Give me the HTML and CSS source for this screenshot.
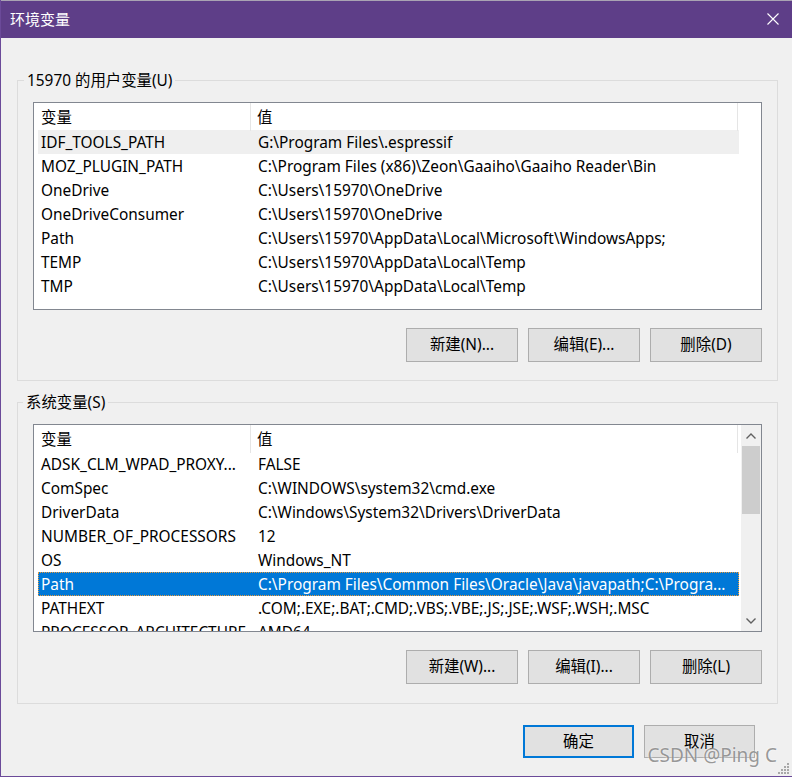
FILE: index.html
```html
<!DOCTYPE html>
<html lang="zh-CN">
<head>
    <meta charset="UTF-8">
    <title>环境变量</title>
    <link rel="stylesheet" href="styles.css">
</head>
<body>
    <div class="window">
        <header class="titlebar">
            <span class="title">环境变量</span>
            <svg class="close" width="12" height="12" viewBox="0 0 12 12">
                <path d="M0.5 0.5 L11.5 11.5 M11.5 0.5 L0.5 11.5" stroke="#fff" stroke-width="1.1" fill="none"/>
            </svg>
        </header>

        <main class="body">
            <fieldset class="group">
                <legend>15970 的用户变量(U)</legend>
                <div class="list">
                    <div class="list-content">
                        <div class="list-head">
                            <div class="head-cell first">变量</div>
                            <div class="head-cell">值</div>
                        </div>
                        <div class="row hover"><span>IDF_TOOLS_PATH</span><span>G:\Program Files\.espressif</span></div>
                        <div class="row"><span>MOZ_PLUGIN_PATH</span><span>C:\Program Files (x86)\Zeon\Gaaiho\Gaaiho Reader\Bin</span></div>
                        <div class="row"><span>OneDrive</span><span>C:\Users\15970\OneDrive</span></div>
                        <div class="row"><span>OneDriveConsumer</span><span>C:\Users\15970\OneDrive</span></div>
                        <div class="row"><span>Path</span><span>C:\Users\15970\AppData\Local\Microsoft\WindowsApps;</span></div>
                        <div class="row"><span>TEMP</span><span>C:\Users\15970\AppData\Local\Temp</span></div>
                        <div class="row"><span>TMP</span><span>C:\Users\15970\AppData\Local\Temp</span></div>
                    </div>
                </div>
                <div class="buttons">
                    <button class="btn">新建(N)...</button>
                    <button class="btn">编辑(E)...</button>
                    <button class="btn">删除(D)</button>
                </div>
            </fieldset>

            <fieldset class="group system">
                <legend>系统变量(S)</legend>
                <div class="list">
                    <div class="list-content">
                        <div class="list-head">
                            <div class="head-cell first">变量</div>
                            <div class="head-cell">值</div>
                        </div>
                        <div class="row"><span>ADSK_CLM_WPAD_PROXY...</span><span>FALSE</span></div>
                        <div class="row"><span>ComSpec</span><span>C:\WINDOWS\system32\cmd.exe</span></div>
                        <div class="row"><span>DriverData</span><span>C:\Windows\System32\Drivers\DriverData</span></div>
                        <div class="row"><span>NUMBER_OF_PROCESSORS</span><span>12</span></div>
                        <div class="row"><span>OS</span><span>Windows_NT</span></div>
                        <div class="row selected"><span>Path</span><span>C:\Program Files\Common Files\Oracle\Java\javapath;C:\Progra...</span></div>
                        <div class="row"><span>PATHEXT</span><span>.COM;.EXE;.BAT;.CMD;.VBS;.VBE;.JS;.JSE;.WSF;.WSH;.MSC</span></div>
                        <div class="row"><span>PROCESSOR_ARCHITECTURE</span><span>AMD64</span></div>
                    </div>
                    <div class="scrollbar">
                        <div class="arrow">
                            <svg width="10" height="6" viewBox="0 0 10 6"><path d="M0.5 5.5 L5 1 L9.5 5.5" stroke="#606060" stroke-width="1.4" fill="none"/></svg>
                        </div>
                        <div class="thumb"></div>
                        <div class="track"></div>
                        <div class="arrow">
                            <svg width="10" height="6" viewBox="0 0 10 6"><path d="M0.5 0.5 L5 5 L9.5 0.5" stroke="#606060" stroke-width="1.4" fill="none"/></svg>
                        </div>
                    </div>
                </div>
                <div class="buttons">
                    <button class="btn">新建(W)...</button>
                    <button class="btn">编辑(I)...</button>
                    <button class="btn">删除(L)</button>
                </div>
            </fieldset>

            <div class="dialog-buttons">
                <button class="btn default">确定</button>
                <button class="btn">取消</button>
            </div>
        </main>

        <div class="watermark">CSDN @Ping C</div>
        <svg class="grip" width="12" height="12" viewBox="0 0 12 12" fill="#a8a8a8">
            <rect x="9" y="1" width="2" height="2"/>
            <rect x="6" y="4" width="2" height="2"/>
            <rect x="9" y="4" width="2" height="2"/>
            <rect x="3" y="7" width="2" height="2"/>
            <rect x="6" y="7" width="2" height="2"/>
            <rect x="9" y="7" width="2" height="2"/>
            <rect x="0" y="10" width="2" height="2"/>
            <rect x="3" y="10" width="2" height="2"/>
            <rect x="6" y="10" width="2" height="2"/>
            <rect x="9" y="10" width="2" height="2"/>
        </svg>
    </div>
</body>
</html>
```

FILE: styles.css
```css
/* Base */
body {
    margin: 0;
    padding: 0;
    font-family: "Noto Sans", "Noto Sans CJK SC", sans-serif;
    font-size: 15.4px;
    color: #000;
    background: #f0f0f0;
}

/* Window */
.window {
    position: relative;
    width: 792px;
    height: 777px;
    box-sizing: border-box;
    background: #f0f0f0;
    border-left: 1px solid #6b4a99;
    border-bottom: 1px solid #6b4a99;
    overflow: hidden;
}

.titlebar {
    height: 38px;
    box-sizing: border-box;
    border-top: 1px solid #a9a3b3;
    background: #5e3e88;
    color: #fff;
    display: flex;
    align-items: center;
    justify-content: space-between;
    padding: 0 13px 1px 9px;
}

.title {
    font-family: "Noto Sans CJK SC", sans-serif;
    font-size: 15px;
    line-height: 20px;
}

.close {
    display: block;
}

/* Content */
.body {
    padding: 32px 14px 0 16px;
}

.group {
    margin: 0;
    padding: 12px 15px 18px;
    border: 1px solid #dcdcdc;
    min-width: 0;
}

.group.system {
    margin-top: 11px;
    padding-bottom: 19px;
}

.group legend {
    margin-left: -9px;
    padding: 1px 3px 0;
    line-height: 19px;
}

.group.system legend {
    margin-left: -10px;
}

/* List view */
.list {
    height: 208px;
    box-sizing: border-box;
    border: 1px solid #828790;
    background: #fff;
    display: flex;
    overflow: hidden;
}

.list-content {
    width: 706px;
    flex: none;
}

.list-head {
    height: 27px;
    display: grid;
    grid-template-columns: 217px 487px;
}

.head-cell {
    line-height: 27px;
    padding: 1px 0 0 6px;
    border-right: 1px solid #e5e5e5;
}

.head-cell.first {
    padding-left: 7px;
}

.row {
    margin-left: 4px;
    width: 701px;
    height: 24px;
    display: grid;
    grid-template-columns: 213px 488px;
    grid-template-rows: 24px;
    box-sizing: border-box;
    white-space: nowrap;
}

.row span {
    overflow: hidden;
    line-height: 23px;
    padding: 1px 0 0 7px;
}

.row span:first-child {
    padding-left: 3px;
}

.row.hover {
    background: #efefef;
}

.row.selected {
    background: #0078d7;
    color: #fff;
    outline: 1px dotted #e89a3c;
    outline-offset: -1px;
}

/* Scrollbar */
.scrollbar {
    margin-left: 1px;
    width: 21px;
    background: #f0f0f0;
    display: flex;
    flex-direction: column;
}

.arrow {
    height: 21px;
    display: flex;
    align-items: center;
    justify-content: center;
}

.thumb {
    height: 68px;
    margin: 0 1px;
    background: #cdcdcd;
}

.track {
    flex: 1;
}

/* Buttons */
.buttons {
    margin-top: 18px;
    display: flex;
    justify-content: flex-end;
    gap: 10px;
}

.btn {
    width: 112px;
    height: 34px;
    box-sizing: border-box;
    background: #e1e1e1;
    border: 1px solid #adadad;
    font-family: "Noto Sans", "Noto Sans CJK SC", sans-serif;
    font-size: 15.4px;
    color: #000;
    padding: 0 0 3px;
}

.dialog-buttons {
    margin-top: 21px;
    margin-right: 23px;
    display: flex;
    justify-content: flex-end;
    gap: 10px;
}

.dialog-buttons .btn {
    width: 111px;
    height: 33px;
}

.btn.default {
    border: 2px solid #0078d7;
}

/* Overlays */
.watermark {
    position: absolute;
    right: 15px;
    bottom: 8px;
    font-family: "Noto Sans", sans-serif;
    font-size: 19px;
    color: rgba(120, 120, 120, 0.75);
    text-shadow: 0 0 2px rgba(255, 255, 255, 0.9);
}

.grip {
    position: absolute;
    right: 2px;
    bottom: 2px;
}
```
